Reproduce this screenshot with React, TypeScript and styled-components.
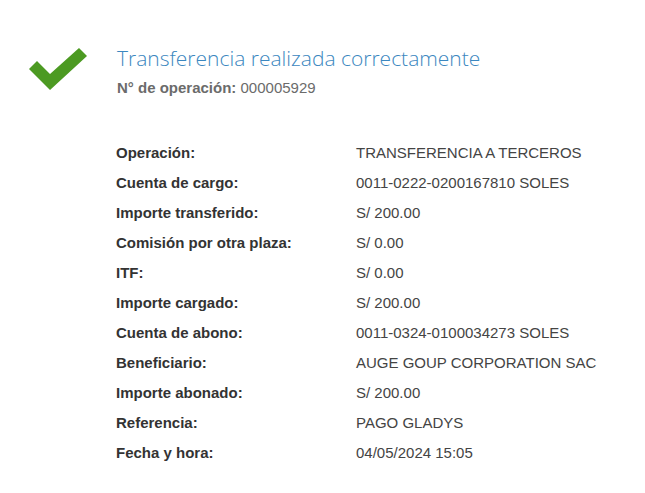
import React from "react";
import styled, { createGlobalStyle } from "styled-components";

const Global = createGlobalStyle`
  html, body { margin: 0; padding: 0; background: #ffffff; }
  body { font-family: "Liberation Sans", Arial, sans-serif; }
`;

const Page = styled.div`
  width: 645px;
  height: 493px;
  background: #fff;
  box-sizing: border-box;
  padding: 44px 0 0 28px;
`;

const Header = styled.div`
  display: flex;
  align-items: flex-start;
  gap: 29px;
`;

const CheckIcon = styled.svg`
  width: 60px;
  height: 44px;
  margin-top: 2px;
  flex-shrink: 0;
`;

const HeaderText = styled.div`
  display: flex;
  flex-direction: column;
`;

const Title = styled.h1`
  margin: 0;
  font-family: "Open Sans", "Liberation Sans", sans-serif;
  font-weight: 300;
  font-size: 21px;
  line-height: 28px;
  color: #3b87c0;
`;

const OpNumber = styled.div`
  margin-top: 7px;
  font-size: 15px;
  line-height: 18px;
  color: #6b6b6b;
`;

const OpLabel = styled.span`
  font-weight: bold;
`;

const Details = styled.div`
  margin: 40px 0 0 88px;
  display: grid;
  grid-template-columns: 240px 1fr;
  grid-auto-rows: 30px;
  align-items: center;
`;

const Label = styled.div`
  font-size: 15px;
  font-weight: bold;
  color: #333333;
`;

const Value = styled.div`
  font-size: 15px;
  color: #444444;
`;

const rows: [string, string][] = [
  ["Operación:", "TRANSFERENCIA A TERCEROS"],
  ["Cuenta de cargo:", "0011-0222-0200167810 SOLES"],
  ["Importe transferido:", "S/ 200.00"],
  ["Comisión por otra plaza:", "S/ 0.00"],
  ["ITF:", "S/ 0.00"],
  ["Importe cargado:", "S/ 200.00"],
  ["Cuenta de abono:", "0011-0324-0100034273 SOLES"],
  ["Beneficiario:", "AUGE GOUP CORPORATION SAC"],
  ["Importe abonado:", "S/ 200.00"],
  ["Referencia:", "PAGO GLADYS"],
  ["Fecha y hora:", "04/05/2024 15:05"],
];

export default function App() {
  return (
    <>
      <Global />
      <Page>
        <Header>
          <CheckIcon viewBox="28 45 60 44" aria-hidden="true">
            <polygon
              points="29,68 37,60 50,73 79,47 87,55 50,89"
              fill="#4c9a22"
            />
          </CheckIcon>
          <HeaderText>
            <Title>Transferencia realizada correctamente</Title>
            <OpNumber>
              <OpLabel>N° de operación:</OpLabel> 000005929
            </OpNumber>
          </HeaderText>
        </Header>
        <Details>
          {rows.map(([l, v]) => (
            <React.Fragment key={l}>
              <Label>{l}</Label>
              <Value>{v}</Value>
            </React.Fragment>
          ))}
        </Details>
      </Page>
    </>
  );
}
